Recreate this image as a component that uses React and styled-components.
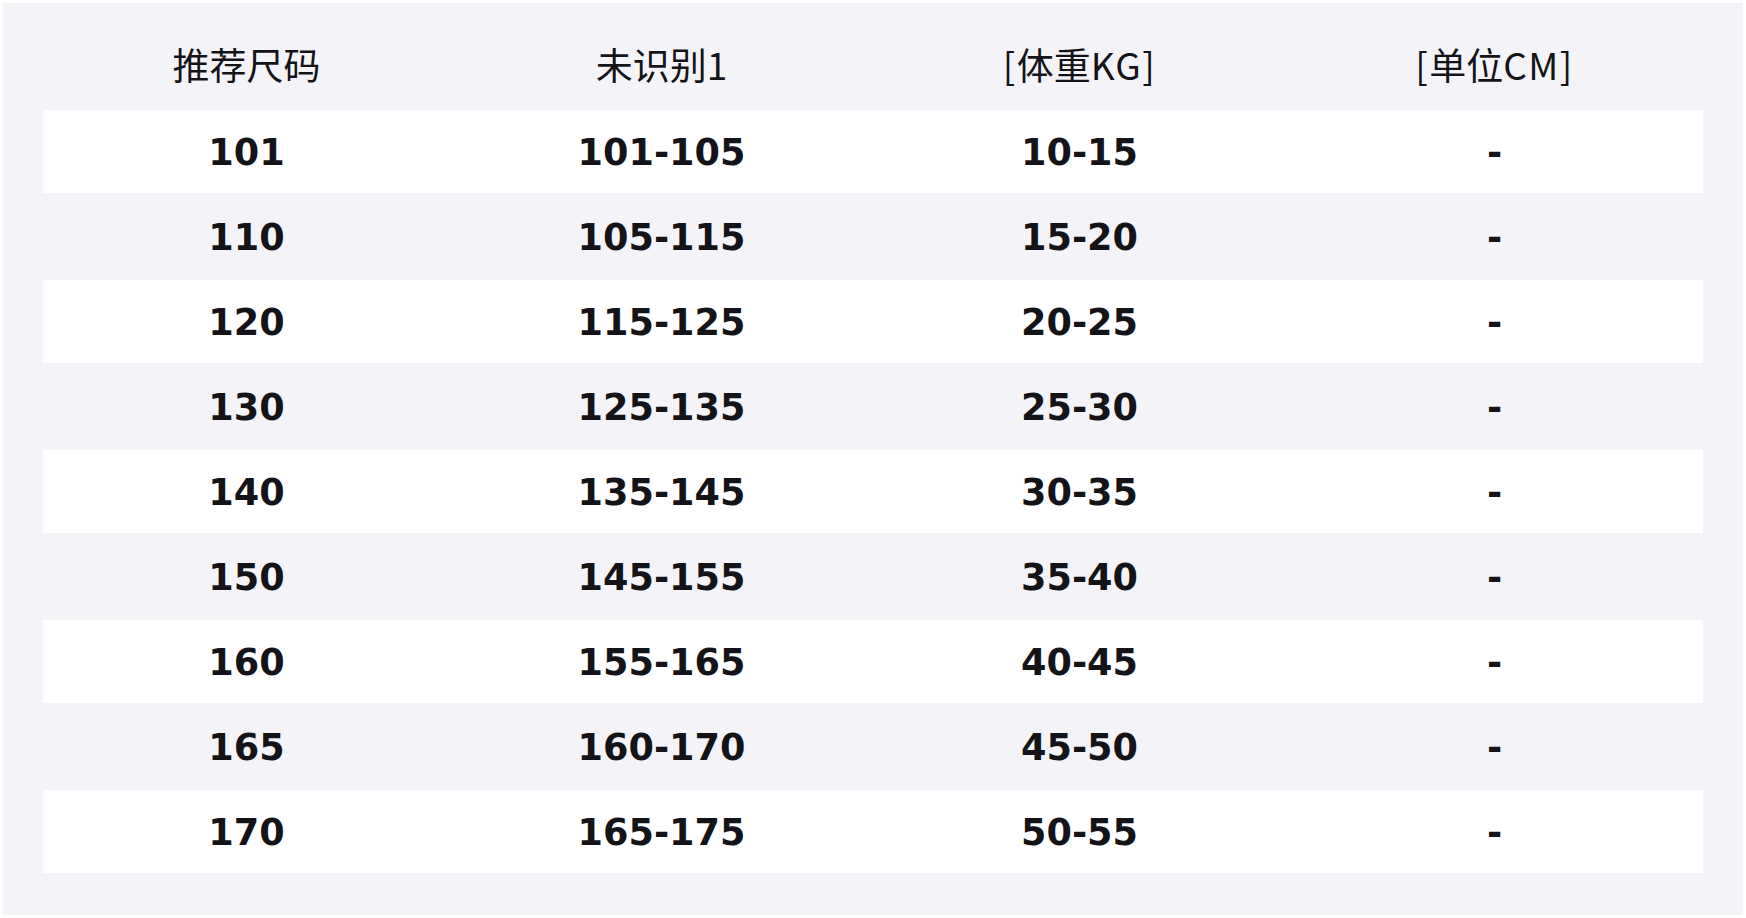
import styled, { createGlobalStyle } from 'styled-components';

const GlobalStyle = createGlobalStyle`
  html, body {
    margin: 0;
    padding: 0;
    background: #ffffff;
  }
`;

const Page = styled.div`
  padding: 3px;
  width: 1746px;
  height: 918px;
  box-sizing: border-box;
`;

const Panel = styled.div`
  height: 100%;
  box-sizing: border-box;
  background: #f4f4f8;
  padding: 0 40px;
  display: flex;
  flex-direction: column;
`;

const Columns = styled.div`
  display: grid;
  grid-template-columns: 407fr 423fr 413fr 417fr;
  align-items: center;
  text-align: center;
  color: #141418;
`;

const HeaderRow = styled(Columns)`
  padding: 39px 0 24px;
  font-family: "Noto Sans CJK SC", "DejaVu Sans", sans-serif;
  font-size: 37px;
  line-height: 44px;
  font-weight: 400;
`;

const Latin = styled.span`
  letter-spacing: 1.5px;
`;

const Row = styled(Columns)`
  box-sizing: border-box;
  height: ${(p) => (p.$white ? 83 : 87)}px;
  padding-top: 2px;
  background: ${(p) => (p.$white ? '#ffffff' : 'transparent')};
  font-family: "DejaVu Sans", "Liberation Sans", sans-serif;
  font-size: 36.6px;
  font-weight: 700;
`;

const Cell = styled.div`
  white-space: nowrap;
`;

const rows = [
  ['101', '101-105', '10-15', '-'],
  ['110', '105-115', '15-20', '-'],
  ['120', '115-125', '20-25', '-'],
  ['130', '125-135', '25-30', '-'],
  ['140', '135-145', '30-35', '-'],
  ['150', '145-155', '35-40', '-'],
  ['160', '155-165', '40-45', '-'],
  ['165', '160-170', '45-50', '-'],
  ['170', '165-175', '50-55', '-'],
];

export default function App() {
  return (
    <Page>
      <GlobalStyle />
      <Panel>
        <HeaderRow>
          <Cell>推荐尺码</Cell>
          <Cell>未识别1</Cell>
          <Cell>
            <Latin>[</Latin>体重<Latin>KG]</Latin>
          </Cell>
          <Cell>
            <Latin>[</Latin>单位<Latin>CM]</Latin>
          </Cell>
        </HeaderRow>
        {rows.map((r, i) => (
          <Row key={r[0]} $white={i % 2 === 0}>
            {r.map((v, j) => (
              <Cell key={j}>{v}</Cell>
            ))}
          </Row>
        ))}
      </Panel>
    </Page>
  );
}
